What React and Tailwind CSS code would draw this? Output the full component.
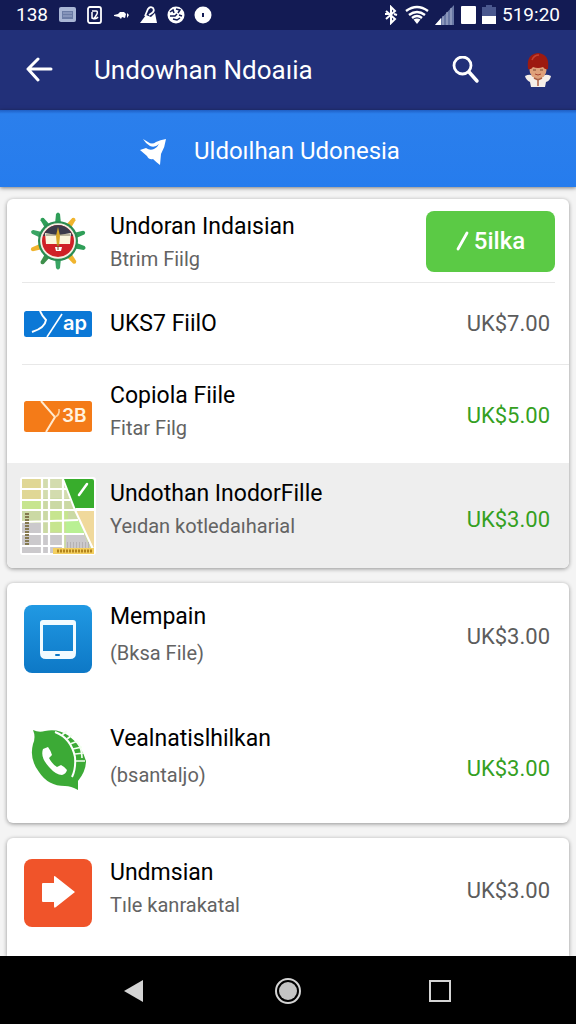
const SECTIONS = [
  [
    { title: 'Undoran Indaısian', sub: 'Btrim Fiilg', Icon: EmblemIcon, action: '5ilka', height: 'min-h-[84px]', text: 'pt-1', divider: 'ml-[15px] mr-[14px]' },
    { title: 'UKS7 FiilO', Icon: BlueCardIcon, price: 'UK$7.00', height: 'min-h-[82px]', divider: 'ml-[15px]' },
    { title: 'Copiola Fiile', sub: 'Fitar Filg', Icon: OrangeCardIcon, price: 'UK$5.00', green: true, height: 'min-h-[98px] pt-1', text: 'pb-2' },
    { title: 'Undothan InodorFille', sub: 'Yeıdan kotledaıharial', Icon: MapIcon, price: 'UK$3.00', green: true, selected: true, height: 'min-h-[105px]', text: 'pb-3', priceClass: 'pt-2' },
  ],
  [
    { title: 'Mempain', sub: '(Bksa File)', Icon: TabletIcon, price: 'UK$3.00', height: 'min-h-[112px]', text: 'pb-2 gap-1', priceClass: 'pb-1' },
    { title: 'Vealnatislhilkan', sub: '(bsantaljo)', Icon: PhoneIcon, price: 'UK$3.00', green: true, height: 'min-h-[128px]', text: 'pb-1 gap-1', priceClass: 'pt-5' },
  ],
  [
    { title: 'Undmsian', sub: 'Tıle kanrakatal', Icon: ArrowIcon, price: 'UK$3.00', height: 'min-h-[108px] pt-0.5', text: 'pb-2', priceClass: 'pb-1' },
  ],
]

const RAYS = [
  [0, '#2f9e58'], [36, '#f0b42e'], [72, '#2f9e58'], [105, '#2f9e58'], [142, '#f0b42e'],
  [180, '#3aa564'], [216, '#3d8f4b'], [252, '#f0b42e'], [290, '#3aa564'], [324, '#2f9e58'],
]

function EmblemIcon() {
  return (
    <svg width="60" height="60" viewBox="0 0 60 60" aria-hidden="true">
      {RAYS.map(([deg, color]) => (
        <path key={deg} d="M27 13L28 3Q30 0 32 3L33 13Z" fill={color} transform={`rotate(${deg} 30 30)`} />
      ))}
      <circle cx="30" cy="30" r="20" fill="#2b8c52" />
      <circle cx="30" cy="30" r="17.800" fill="#f6efe4" />
      <circle cx="30" cy="30" r="16" fill="#cf2027" />
      <path d="M17 21Q22 14 30 14Q38 14 43 21L45 25H15Z" fill="#3b3b4b" />
      <path d="M17 22l12 2v9H18ZM43 22l-12 2v9h11Z" fill="#fbf6dd" />
      <path d="M18 24h24" stroke="#77705a" />
      <path d="M30 16l2 9-1 10h-2l-1-10Z" fill="#d8a827" />
      <path d="M27 36h7l-1 4h-5Z" fill="#fff" />
      <path d="M30 33v6" stroke="#6e4a25" />
    </svg>
  )
}

function BlueCardIcon() {
  return (
    <svg width="68" height="26" viewBox="0 0 68 26" aria-hidden="true">
      <rect width="68" height="26" rx="2.500" fill="#0b78d6" />
      <path d="M16 0Q18 5 22 9Q21 17 8 21" fill="none" stroke="#fff" strokeWidth="2" />
      <path d="M38 3L23 26" stroke="#fff" strokeWidth="1.600" />
      <text x="39" y="19" fill="#fff" fontFamily="Inter, sans-serif" fontWeight="600" fontSize="20">ap</text>
    </svg>
  )
}

function OrangeCardIcon() {
  return (
    <svg width="68" height="31" viewBox="0 0 68 31" aria-hidden="true">
      <rect width="68" height="31" rx="2.500" fill="#f47b18" />
      <path d="M17 0L31 16L22 31" fill="none" stroke="#ffe9cf" strokeWidth="2" />
      <path d="M31 16Q36 14 35 8" fill="none" stroke="#ffd3a1" strokeWidth="1.500" />
      <text x="38" y="21" fill="#fff3e0" fontFamily="Inter, sans-serif" fontWeight="600" fontSize="19">3B</text>
    </svg>
  )
}

function MapIcon() {
  return (
    <svg width="76" height="78" viewBox="0 0 76 78" aria-hidden="true">
      <rect width="76" height="78" rx="3" fill="#fff" />
      <path d="M2 2h42l28 70v4H2Z" fill="#cbd9a4" />
      <path d="M2 2h20v20H2Z" fill="#e0d795" />
      <path d="M23 2h21l7 19H23Z" fill="#d3dcae" />
      <path d="M2 23h20v9H2ZM30 33h18v22H30Z" fill="#c7e58f" />
      <path d="M46 44h13l5 12H46Z" fill="#b9f093" />
      <path d="M2 46h20v30H2ZM23 58h20v18H23ZM46 57h18l8 19H46Z" fill="#cbc9cc" />
      <path d="M54 34h20v38Z" fill="#f0d99c" />
      <path d="M2 12h44M2 23h48M2 33h72M2 45l56-2M2 57h62M2 69h40M22 2v74M29 2v74M43 2v74" stroke="#fff" strokeWidth="2.200" />
      <path d="M43 2h29a2 2 0 0 1 2 2v27H54Z" fill="#38ad2c" />
      <path d="M43 2l12 31 18 39" fill="none" stroke="#fff" strokeWidth="2" />
      <path d="M59 18l8-11" stroke="#fff" strokeWidth="2.500" strokeLinecap="round" />
      <path d="M7 36v33" stroke="#85794f" strokeWidth="4" strokeDasharray="2 1" />
      <rect x="33" y="71" width="41" height="6" fill="#f3cf61" />
      <path d="M37 74h36" stroke="#b3841c" strokeWidth="3" strokeDasharray="2 1" />
      <path d="M47 68h22" stroke="#b5b2b4" strokeWidth="6" strokeDasharray="1 2" />
    </svg>
  )
}

function TabletIcon() {
  return (
    <svg width="68" height="68" viewBox="0 0 68 68" aria-hidden="true">
      <defs>
        <linearGradient id="tablet" x1="0" y1="0" x2="0" y2="1">
          <stop stopColor="#2199e3" />
          <stop offset="1" stopColor="#0d78c6" />
        </linearGradient>
      </defs>
      <rect width="68" height="68" rx="8" fill="url(#tablet)" />
      <path fillRule="evenodd" fill="#f2fbff" d="M19 15H49Q52 15 52 18V48Q52 54 46 54H22Q16 54 16 48V18Q16 15 19 15ZM19 20V46H49V20Z" />
      <rect x="31" y="49" width="5" height="2" rx="1" fill="#0d78c6" />
    </svg>
  )
}

function PhoneIcon() {
  return (
    <svg width="60" height="64" viewBox="0 0 60 64" aria-hidden="true">
      <path d="M5 3Q11 6 17 4Q30 1 41 9Q54 19 58 34Q58 44 50 54L50 63Q43 59 37 59Q20 59 11 45Q1 32 5 17Q8 10 5 3Z" fill="#3caa36" />
      <path d="M27 5Q43 11 47 30Q48 42 44 50" fill="none" stroke="#fff" strokeWidth="2" />
      <path d="M39 12l5-4M42 17l8-3M45 22l9-2M47 27l9-1M48 34l9 0M34 8l5-4M49 14q5 8 5 17" fill="none" stroke="#f2ffef" strokeWidth="1.700" />
      <path d="M15 22L20 20Q23 24 24 28L21 31Q24 37 29 40L33 38Q37 40 39 43Q38 47 34 48Q28 48 21 40Q12 30 15 22Z" fill="#fff" />
    </svg>
  )
}

function ArrowIcon() {
  return (
    <svg width="68" height="68" viewBox="0 0 68 68" aria-hidden="true">
      <rect width="68" height="68" rx="8" fill="#f0542a" />
      <path d="M19 24H30V18Q30 16 32 18L51 33L32 48Q30 50 30 47V43H19Q18 43 18 42V25Q18 24 19 24Z" fill="#fff" />
    </svg>
  )
}

function StatusBar() {
  return (
    <div className="h-[30px] shrink-0 bg-[#131b54] px-4 flex items-center justify-between text-[19px] leading-[30px] text-white">
      <div className="flex items-center gap-[9px]">
        <span className="mr-0.5">138</span>
        <svg width="18" height="18" viewBox="0 0 18 18">
          <rect x="0" y="1" width="17" height="15" rx="2" fill="#a9b6d5" />
          <path d="M3 5h11v8H3Z" fill="#6c7da7" />
          <path d="M4 7h9M4 10h9" stroke="#9faccd" />
        </svg>
        <svg width="18" height="18" viewBox="0 0 18 18" fill="none" stroke="#fff" strokeWidth="1.800">
          <rect x="2" y="1" width="13" height="16" rx="2" />
          <path d="M6 5h4q2 0 1 3l-3 5M6 6v6q4 2 6-1" strokeWidth="1.500" />
        </svg>
        <svg width="18" height="18" viewBox="0 0 18 18" fill="#fff">
          <path d="M1 9l4-1 2-2h4l2 2-1 4-3-1-1 2-2-2-5-1ZM14 7l2 2-2 3Z" />
        </svg>
        <svg width="18" height="18" viewBox="0 0 18 18" fill="#fff">
          <path d="M0 17L6 9l5 2 4-4 2 10Z" />
          <path d="M5 10L8 3q2-3 5-1 2 3-1 5L9 9" fill="none" stroke="#fff" strokeWidth="1.800" />
        </svg>
        <svg width="18" height="18" viewBox="0 0 18 18">
          <circle cx="9" cy="9" r="8.500" fill="#fff" />
          <path d="M3 6l3-2 1 3M9 3l4 1-2 3M3 10h5l2-2M12 9l3 1M6 13l4 1 3-2" fill="none" stroke="#131b54" strokeWidth="1.500" />
        </svg>
        <svg width="18" height="18" viewBox="0 0 18 18">
          <circle cx="9" cy="9" r="8.500" fill="#fff" />
          <rect x="8" y="7" width="2" height="4" fill="#131b54" />
        </svg>
      </div>
      <div className="flex items-center gap-1.5">
        <svg width="15" height="20" viewBox="0 0 15 20" fill="none" stroke="#fff" strokeWidth="2">
          <path d="M2 6l9 8-4 4V2l4 4-9 8M1 9h4M10 9l3 1" />
        </svg>
        <svg width="24" height="20" viewBox="0 0 24 20" fill="none" stroke="#fff" strokeWidth="2.400">
          <path d="M1 6q11-8 22 0M4 10q8-6 16 0M7 13q5-4 10 0" />
          <path d="M8.500 14.500q3.500-2 7 0L12 19Z" fill="#fff" stroke="none" />
        </svg>
        <svg width="20" height="20" viewBox="0 0 20 20">
          <path d="M19 0V20H0Z" fill="#6877a4" />
          <path d="M6 13v7H0Z" fill="#fff" />
          <path d="M8 11v9M12 7v13M16 3v17" stroke="#aeb8d2" />
        </svg>
        <svg width="15" height="18" viewBox="0 0 15 18">
          <rect width="15" height="18" rx="1" fill="#fff" />
        </svg>
        <svg width="14" height="20" viewBox="0 0 14 20">
          <path d="M4 0h6v2h4v9H0V2h4Z" fill="#4a588f" />
          <path d="M0 11h14v8H0Z" fill="#fff" />
        </svg>
        <span>519:20</span>
      </div>
    </div>
  )
}

function AppHeader() {
  return (
    <header className="h-20 shrink-0 bg-[#223079] pl-[26px] pr-6 flex items-center text-white">
      <button aria-label="Back" className="shrink-0">
        <svg width="28" height="28" viewBox="0 0 28 28" fill="none" stroke="#fff" strokeWidth="3" strokeLinecap="round" strokeLinejoin="round">
          <path d="M25 13H2M12 3L2 13L12 24" />
        </svg>
      </button>
      <h1 className="ml-10 flex-1 text-[26px] leading-8">Undowhan Ndoaıia</h1>
      <button aria-label="Search" className="shrink-0">
        <svg width="28" height="28" viewBox="0 0 28 28" fill="none" stroke="#fff" strokeWidth="2.800" strokeLinecap="round">
          <circle cx="10.500" cy="9.500" r="8.500" />
          <path d="M17 16L25 25" strokeWidth="3.500" />
        </svg>
      </button>
      <button aria-label="Profile" className="ml-[44px] shrink-0">
        <svg width="28" height="36" viewBox="0 0 28 36">
          <path d="M1 24Q7 21 10 25L14 27L18 25Q21 21 27 24Q26 29 22 30L21 35H7L6 30Q2 28 1 24Z" fill="#f5eee8" />
          <ellipse cx="14" cy="18" rx="8.500" ry="9" fill="#dfa17a" />
          <path d="M4 17Q2 2 14 1Q26 2 24 17Q21 18 19 15Q14 17 9 15Q7 18 4 17Z" fill="#9d1a10" />
          <path d="M8 8Q10 3 15 3" stroke="#c5402d" strokeWidth="1.500" fill="none" />
          <path d="M9 18h3M16 18h3" stroke="#7a4630" />
          <path d="M11 22Q14 24 17 22" stroke="#a74432" fill="none" />
          <path d="M10 26L14 28L18 26M14 28V34" stroke="#ad6144" strokeWidth="1.500" fill="none" />
        </svg>
      </button>
    </header>
  )
}

function Banner() {
  return (
    <div className="h-[77px] shrink-0 bg-linear-to-b from-[#1f5fc4] via-[#2b7fec] via-5% to-[#267ced] shadow-[0_1px_4px_rgba(0,0,0,0.5)] flex items-center pl-[140px] gap-[26px] pt-1 text-white">
      <svg width="28" height="28" viewBox="0 0 28 28" fill="#fff" aria-hidden="true">
        <path d="M3 2L8 5Q12 8 16 5Q20 3 26 2Q25 10 21 17L20 28Q16 25 13 22Q9 23 7 19L0 13L6 11Q10 14 14 12Q17 11 19 7Q15 11 10 9Q6 7 3 2Z" />
      </svg>
      <span className="text-2xl">Uldoılhan Udonesia</span>
    </div>
  )
}

function Row({ item }) {
  const { title, sub, Icon, price, action, green, selected, height, divider, text, priceClass } = item
  return (
    <li className={selected ? 'bg-[#eeeeee]' : ''}>
      <div className={`flex items-center pl-[13px] gap-[14px] ${height} ${action ? 'pr-[14px]' : 'pr-[19px]'}`}>
        <div className="w-[76px] shrink-0 flex justify-center"><Icon /></div>
        <div className={`flex-1 min-w-0 flex flex-col ${text || ''}`}>
          <h2 className="text-[23px] leading-8 text-black">{title}</h2>
          {sub && <p className="text-xl leading-8 text-[#636363]">{sub}</p>}
        </div>
        {price && (
          <span className={`shrink-0 text-[22px] leading-8 ${green ? 'text-[#35a01f]' : 'text-[#5c5c5c]'} ${priceClass || ''}`}>{price}</span>
        )}
        {action && (
          <button className="h-[61px] w-[129px] shrink-0 rounded-lg bg-[#5bca45] text-white text-2xl font-medium flex items-center justify-center gap-1">
            <svg width="14" height="20" viewBox="0 0 14 20" aria-hidden="true">
              <path d="M2 18L11 2" stroke="#fff" strokeWidth="2.800" strokeLinecap="round" />
            </svg>
            {action}
          </button>
        )}
      </div>
      {divider && <hr className={`-mt-px border-[#e8e8e8] ${divider}`} />}
    </li>
  )
}

export default function App() {
  return (
    <div className="h-screen flex flex-col bg-[#f4f4f4] font-['Roboto',sans-serif]">
      <StatusBar />
      <AppHeader />
      <Banner />
      <main className="flex-1 min-h-0 overflow-y-auto px-[7px] pt-3 flex flex-col gap-[15px]">
        {SECTIONS.map((items, i) => (
          <ul
            key={i}
            className={`shrink-0 overflow-hidden bg-white shadow-[0_1px_4px_rgba(0,0,0,0.4)] ${i === SECTIONS.length - 1 ? 'grow rounded-t-md' : 'rounded-md'}`}
          >
            {items.map((item) => <Row key={item.title} item={item} />)}
          </ul>
        ))}
      </main>
      <nav className="h-[68px] shrink-0 bg-black px-[120px] flex items-center justify-between">
        <button aria-label="Back">
          <svg width="28" height="28" viewBox="0 0 28 28"><path d="M4 15L23 4V26Z" fill="#d4d4d4" /></svg>
        </button>
        <button aria-label="Home">
          <svg width="28" height="28" viewBox="0 0 28 28">
            <circle cx="14" cy="15" r="12" fill="none" stroke="#d4d4d4" strokeWidth="2" />
            <circle cx="14" cy="15" r="9" fill="#c4c4c4" />
          </svg>
        </button>
        <button aria-label="Recent apps">
          <svg width="28" height="28" viewBox="0 0 28 28"><rect x="2" y="5" width="20" height="20" fill="none" stroke="#d4d4d4" strokeWidth="2" /></svg>
        </button>
      </nav>
    </div>
  )
}
